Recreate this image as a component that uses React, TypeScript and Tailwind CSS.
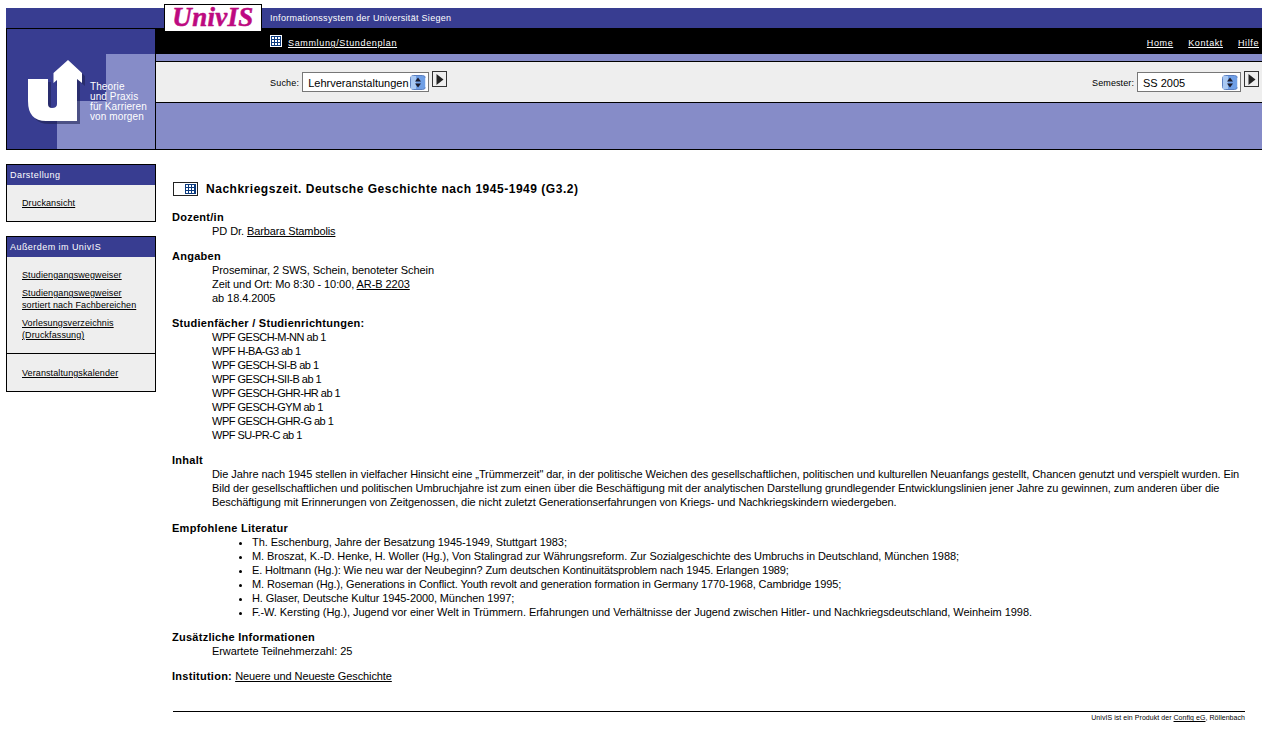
const sans = "font-['Liberation_Sans',Arial,sans-serif]";

function GridIcon({ className, framed }: { className?: string; framed?: boolean }) {
  return (
    <svg width={framed ? 12 : 11} height={framed ? 12 : 10} viewBox={framed ? "0 0 12 12" : "1 1 11 10"} className={className} shapeRendering="crispEdges">
      <rect width="12" height="12" fill={framed ? "#ffffff" : "#0b3a7e"} />
      <rect x="1" y="1" width="10" height="10" fill="#0b3a7e" />
      {[2, 5, 8].map((x) =>
        [2, 5, 8].map((y) => <rect key={`${x}-${y}`} x={x} y={y} width="2" height="2" fill="#ffffff" />)
      )}
    </svg>
  );
}

function GoButton() {
  return (
    <span className="flex h-[16px] w-[15px] items-center justify-center border border-[#333333] bg-[#eeeeee]">
      <svg width="8" height="11" viewBox="0 0 8 11">
        <path d="M0.5 0L7.5 5.5L0.5 11Z" fill="#222222" />
      </svg>
    </span>
  );
}

function Select({ label, width }: { label: string; width: string }) {
  return (
    <span className={`flex h-[20px] items-center justify-between border border-[#777777] bg-white pl-[5px] pr-[2px] text-[11px] text-black ${width}`}>
      <span className="whitespace-nowrap pt-[1px]">{label}</span>
      <svg width="16" height="15" viewBox="0 0 16 15">
        <rect x="0.5" y="0.5" width="15" height="14" rx="3" fill="#6f9fe6" stroke="#5b7fc0" />
        <rect x="1" y="1" width="5" height="13" fill="#a9c8f2" />
        <path d="M8 2.5L11 6.5H5ZM8 12.5L5 8.5H11Z" fill="#1a1a2a" />
        <path d="M15.5 2.5V12.5" stroke="#dfe8f7" />
      </svg>
    </span>
  );
}

function Brand() {
  const u = "M28 79H48V104Q48 108 52 108Q57 108 57 104V80L53.5 83V73L68 60L82 73V83L77 79V121H46Q28 121 28 101Z";
  return (
    <svg width="148" height="120" viewBox="7 29 148 120" className="block">
      <rect x="7" y="29" width="148" height="120" fill="#383d91" />
      <path d="M106 54H155V149H57V101H106Z" fill="#868cc8" />
      <path d={u} transform="translate(3 3)" fill="#1d2050" opacity="0.55" />
      <path d={u} fill="#ffffff" />
    </svg>
  );
}

function Side({ title, children }: { title: string; children: React.ReactNode }) {
  return (
    <section className="border border-black bg-[#eeeeee]">
      <h2 className="flex h-[20px] items-center bg-[#383d91] pl-[3px] text-[9px] font-normal tracking-[0.45px] text-white">{title}</h2>
      {children}
    </section>
  );
}

function SideLink({ children }: { children: React.ReactNode }) {
  return <a className="block text-[9px] leading-[12px] tracking-[0.1px] text-black underline">{children}</a>;
}

function Label({ children }: { children: React.ReactNode }) {
  return <div className="font-bold tracking-[0.27px]">{children}</div>;
}

function Block({ title, children, tight, gap }: { title: string; children: React.ReactNode; tight?: boolean; gap?: boolean }) {
  return (
    <div className={gap ? "mb-[12px]" : "mb-[11px]"}>
      <Label>{title}</Label>
      <div className={`pl-[40px] ${tight ? "tracking-[-0.5px]" : "tracking-[-0.07px]"}`}>{children}</div>
    </div>
  );
}

export default function App() {
  return (
    <div className={`relative h-[735px] overflow-hidden bg-white pt-[8px] ${sans} text-[11px] leading-[14px] text-black`}>
      <div className="ml-[6px] mr-[5px] h-[20px] bg-[#383d91] pl-[264px] pt-[4px] text-[9px] leading-[12px] tracking-[0.3px] text-white">
        Informationssystem der Universität Siegen
      </div>
      <div className="absolute left-[164px] top-[4px] flex h-[28px] w-[98px] items-center justify-center border border-black bg-white pb-[2px] font-['Liberation_Serif',serif] text-[27px] font-bold italic leading-none tracking-[0.3px] text-[#bd0a80] [-webkit-text-stroke:0.5px_#bd0a80]">
        UnivIS
      </div>

      <div className="ml-[6px] mr-[5px] flex h-[122px]">
        <div className="w-[150px] border border-black">
          <div className="relative">
            <Brand />
            <div className="absolute left-[83px] top-[53px] text-[10px] leading-[10px] tracking-[0.1px] text-white">
              Theorie<br />und Praxis<br />für Karrieren<br />von morgen
            </div>
          </div>
        </div>
        <div className="flex flex-1 flex-col">
          <div className="flex h-[26px] bg-black pl-[114px] pr-[3px] text-[9px] tracking-[0.65px] text-white">
            <GridIcon framed className="mt-[7px]" />
            <a className="ml-[6px] mt-[8px] underline">Sammlung/Stundenplan</a>
            <div className="ml-auto mt-[8px] flex gap-[15px] tracking-[0.6px]">
              <a className="underline">Home</a>
              <a className="underline">Kontakt</a>
              <a className="underline">Hilfe</a>
            </div>
          </div>
          <div className="h-[7px] bg-[#868cc8]" />
          <div className="flex h-[42px] border-y border-black bg-[#eeeeee] pl-[114px] pr-[3px] pt-[10px] text-[9px]">
            <span className="mr-[3px] mt-[4px] tracking-[0.2px]">Suche:</span>
            <Select label="Lehrveranstaltungen" width="w-[127px]" />
            <span className="ml-[3px] -mt-[1px]"><GoButton /></span>
            <span className="ml-auto mr-[3px] mt-[4px] tracking-[0.1px]">Semester:</span>
            <Select label="SS 2005" width="w-[104px]" />
            <span className="ml-[3px] -mt-[1px]"><GoButton /></span>
          </div>
          <div className="flex-1 border-b border-black bg-[#868cc8]" />
        </div>
      </div>

      <div className="mt-[14px] flex">
        <aside className="ml-[6px] flex w-[150px] flex-col gap-[14px]">
          <Side title="Darstellung">
            <div className="h-[36px] pl-[15px] pt-[12px]"><SideLink>Druckansicht</SideLink></div>
          </Side>
          <Side title="Außerdem im UnivIS">
            <div className="flex h-[97px] flex-col gap-[6px] border-b border-black pl-[15px] pt-[12px]">
              <SideLink>Studiengangswegweiser</SideLink>
              <SideLink>Studiengangswegweiser<br />sortiert nach Fachbereichen</SideLink>
              <SideLink>Vorlesungsverzeichnis<br />(Druckfassung)</SideLink>
            </div>
            <div className="h-[37px] pl-[15px] pt-[13px]"><SideLink>Veranstaltungskalender</SideLink></div>
          </Side>
        </aside>

        <main className="ml-[16px] mr-[22px] flex-1 pt-[16px]">
          <div className="mb-[12px] flex items-center">
            <span className="ml-[1px] flex h-[14px] w-[25px] items-center justify-end border border-[#222222] bg-white pr-[1px]">
              <GridIcon />
            </span>
            <h1 className="ml-[8px] text-[12px] font-bold leading-[18px] tracking-[0.52px]">
              Nachkriegszeit. Deutsche Geschichte nach 1945-1949 (G3.2)
            </h1>
          </div>

          <Block title="Dozent/in">PD Dr. <a className="tracking-[-0.12px] underline">Barbara Stambolis</a></Block>
          <Block title="Angaben">
            Proseminar, 2 SWS, Schein, benoteter Schein<br />
            Zeit und Ort: Mo 8:30 - 10:00, <a className="underline">AR-B 2203</a><br />
            ab 18.4.2005
          </Block>
          <Block title="Studienfächer / Studienrichtungen:" tight>
            WPF GESCH-M-NN ab 1<br />
            WPF H-BA-G3 ab 1<br />
            WPF GESCH-SI-B ab 1<br />
            WPF GESCH-SII-B ab 1<br />
            WPF GESCH-GHR-HR ab 1<br />
            WPF GESCH-GYM ab 1<br />
            WPF GESCH-GHR-G ab 1<br />
            WPF SU-PR-C ab 1
          </Block>
          <Block title="Inhalt" gap>
            Die Jahre nach 1945 stellen in vielfacher Hinsicht eine „Trümmerzeit" dar, in der politische Weichen des gesellschaftlichen, politischen und kulturellen Neuanfangs gestellt, Chancen genutzt und verspielt wurden. Ein<br />
            Bild der gesellschaftlichen und politischen Umbruchjahre ist zum einen über die Beschäftigung mit der analytischen Darstellung grundlegender Entwicklungslinien jener Jahre zu gewinnen, zum anderen über die<br />
            Beschäftigung mit Erinnerungen von Zeitgenossen, die nicht zuletzt Generationserfahrungen von Kriegs- und Nachkriegskindern wiedergeben.
          </Block>
          <div className="mb-[11px]">
            <Label>Empfohlene Literatur</Label>
            <ul className="list-disc pl-[80px]">
              <li className="tracking-[-0.07px]">Th. Eschenburg, Jahre der Besatzung 1945-1949, Stuttgart 1983;</li>
              <li className="tracking-[-0.08px]">M. Broszat, K.-D. Henke, H. Woller (Hg.), Von Stalingrad zur Währungsreform. Zur Sozialgeschichte des Umbruchs in Deutschland, München 1988;</li>
              <li className="tracking-[-0.135px]">E. Holtmann (Hg.): Wie neu war der Neubeginn? Zum deutschen Kontinuitätsproblem nach 1945. Erlangen 1989;</li>
              <li className="tracking-[-0.11px]">M. Roseman (Hg.), Generations in Conflict. Youth revolt and generation formation in Germany 1770-1968, Cambridge 1995;</li>
              <li className="tracking-[-0.11px]">H. Glaser, Deutsche Kultur 1945-2000, München 1997;</li>
              <li className="tracking-[-0.05px]">F.-W. Kersting (Hg.), Jugend vor einer Welt in Trümmern. Erfahrungen und Verhältnisse der Jugend zwischen Hitler- und Nachkriegsdeutschland, Weinheim 1998.</li>
            </ul>
          </div>
          <Block title="Zusätzliche Informationen">Erwartete Teilnehmerzahl: 25</Block>
          <div><b className="tracking-[0.27px]">Institution:</b> <a className="tracking-[-0.1px] underline">Neuere und Neueste Geschichte</a></div>
          <footer className="ml-[1px] mt-[28px] border-t border-black pt-[1px] text-right text-[7px] leading-[10px] tracking-[0.05px]">
            UnivIS ist ein Produkt der <a className="underline">Config eG</a>, Röllenbach
          </footer>
        </main>
      </div>
    </div>
  );
}
